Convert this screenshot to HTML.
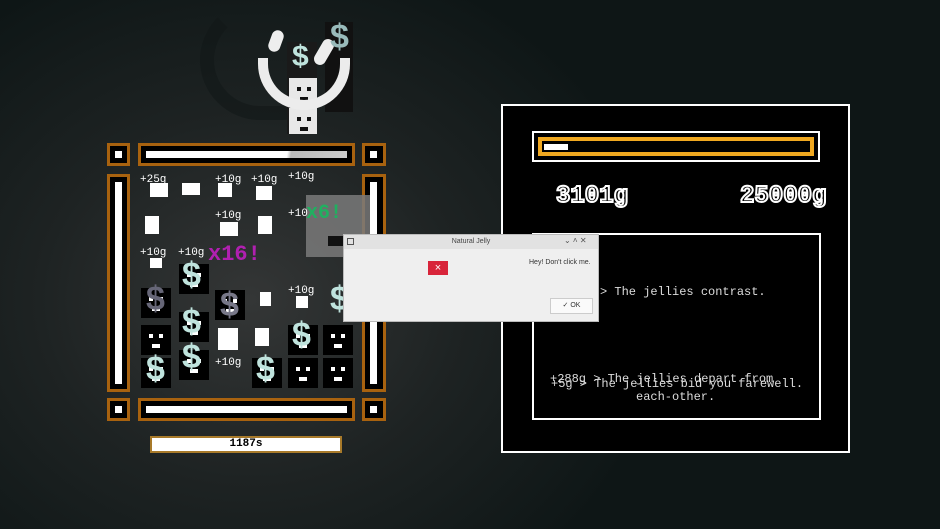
<!DOCTYPE html>
<html><head><style>
body{margin:0;width:940px;height:529px;overflow:hidden;background:radial-gradient(ellipse 420px 360px at 250px 300px,#343636 0%,#1e2323 50%,#0e1616 100%);position:relative;font-family:"Liberation Mono",monospace}
div{position:absolute;box-sizing:border-box}
.ob{border:3px solid #a8620f;background:#000}
.w{background:#fff}
.t{color:#fff;font-size:11px;white-space:nowrap}
.j{background:#000;width:30px;height:30px}
.j::before{content:"";position:absolute;background:#fff;width:4px;height:4px;top:9px;left:8px;box-shadow:10px 0 #fff}
.j::after{content:"";position:absolute;background:#fff;width:8px;height:4px;top:19px;left:11px}
.jw::before{background:#111;box-shadow:10px 0 #111}
.jw::after{background:#111}
.d{color:#bfe3dd;font-size:34px;font-weight:bold;font-family:"Liberation Sans",sans-serif;line-height:1}
.p{background:#fff}
</style></head><body>
<div style="left:200px;top:0;width:140px;height:120px;border-radius:70px;border:14px solid #121818;border-top-color:transparent;border-right-color:transparent;opacity:.6"></div>
<div style="left:287px;top:42px;width:30px;height:92px;background:#1a1a1a"></div>
<div style="left:325px;top:22px;width:28px;height:90px;background:#111"></div>
<div class="j jw" style="left:289px;top:78px;width:28px;height:26px;background:#e8e8e8"></div>
<div class="j jw" style="left:289px;top:108px;width:28px;height:26px;background:#e8e8e8"></div>
<div style="left:258px;top:58px;width:92px;height:52px;border:10px solid #ececec;border-top:none;border-radius:0 0 60px 60px"></div>
<div style="left:270px;top:30px;width:12px;height:22px;background:#eee;border-radius:6px;transform:rotate(20deg)"></div>
<div style="left:318px;top:38px;width:12px;height:28px;background:#eee;border-radius:6px;transform:rotate(30deg)"></div>
<div class="d" style="left:292px;top:42px;font-size:30px">$</div>
<div class="d" style="left:330px;top:20px;font-size:34px;color:#9bb">$</div>
<div class="ob" style="left:107px;top:143px;width:23px;height:23px"><div class="w" style="left:5px;top:5px;width:7px;height:7px"></div></div>
<div class="ob" style="left:362px;top:143px;width:24px;height:23px"><div class="w" style="left:5px;top:5px;width:7px;height:7px"></div></div>
<div class="ob" style="left:107px;top:398px;width:23px;height:23px"><div class="w" style="left:5px;top:5px;width:7px;height:7px"></div></div>
<div class="ob" style="left:362px;top:398px;width:24px;height:23px"><div class="w" style="left:5px;top:5px;width:7px;height:7px"></div></div>
<div class="ob" style="left:138px;top:143px;width:217px;height:23px"><div class="w" style="left:5px;top:5px;width:201px;height:7px;background:linear-gradient(100deg,#fff 70%,#bbb 72%,#ccc)"></div></div>
<div class="ob" style="left:138px;top:398px;width:217px;height:23px"><div class="w" style="left:5px;top:5px;width:201px;height:7px"></div></div>
<div class="ob" style="left:107px;top:174px;width:23px;height:218px"><div class="w" style="left:5px;top:5px;width:7px;height:202px"></div></div>
<div class="ob" style="left:362px;top:174px;width:24px;height:218px"><div class="w" style="left:5px;top:5px;width:7px;height:202px"></div></div>
<div style="left:150px;top:436px;width:192px;height:17px;background:#fff;border:2px solid #a87a2a;font-size:11px;text-align:center;font-weight:bold;line-height:13px">1187s</div>
<div style="left:306px;top:195px;width:64px;height:62px;background:#7a7a7a;opacity:.85"></div>
<div style="left:328px;top:236px;width:18px;height:10px;background:#111"></div>
<div class="j" style="left:141px;top:288px"></div>
<div class="j" style="left:141px;top:325px"></div>
<div class="j" style="left:141px;top:358px"></div>
<div class="j" style="left:179px;top:264px"></div>
<div class="j" style="left:179px;top:312px"></div>
<div class="j" style="left:179px;top:350px"></div>
<div class="j" style="left:215px;top:290px"></div>
<div class="j" style="left:252px;top:358px"></div>
<div class="j" style="left:288px;top:325px"></div>
<div class="j" style="left:288px;top:358px"></div>
<div class="j" style="left:323px;top:325px"></div>
<div class="j" style="left:323px;top:358px"></div>
<div class="d" style="left:146px;top:352px">$</div>
<div class="d" style="left:182px;top:258px">$</div>
<div class="d" style="left:182px;top:305px">$</div>
<div class="d" style="left:182px;top:340px">$</div>
<div class="d" style="left:256px;top:352px">$</div>
<div class="d" style="left:292px;top:318px">$</div>
<div class="d" style="left:330px;top:282px">$</div>
<div class="d" style="left:146px;top:282px;color:#667">$</div>
<div class="d" style="left:220px;top:288px;color:#778">$</div>
<div class="p" style="left:150px;top:183px;width:18px;height:14px"></div>
<div class="p" style="left:182px;top:183px;width:18px;height:12px"></div>
<div class="p" style="left:218px;top:183px;width:14px;height:14px"></div>
<div class="p" style="left:256px;top:186px;width:16px;height:14px"></div>
<div class="p" style="left:145px;top:216px;width:14px;height:18px"></div>
<div class="p" style="left:220px;top:222px;width:18px;height:14px"></div>
<div class="p" style="left:258px;top:216px;width:14px;height:18px"></div>
<div class="p" style="left:150px;top:258px;width:12px;height:10px"></div>
<div class="p" style="left:260px;top:292px;width:11px;height:14px"></div>
<div class="p" style="left:218px;top:328px;width:20px;height:22px"></div>
<div class="p" style="left:255px;top:328px;width:14px;height:18px"></div>
<div class="p" style="left:296px;top:296px;width:12px;height:12px"></div>
<div class="t" style="left:140px;top:174px">+25g</div>
<div class="t" style="left:215px;top:174px">+10g</div>
<div class="t" style="left:251px;top:174px">+10g</div>
<div class="t" style="left:288px;top:171px">+10g</div>
<div class="t" style="left:215px;top:210px">+10g</div>
<div class="t" style="left:288px;top:208px">+10</div>
<div class="t" style="left:140px;top:247px">+10g</div>
<div class="t" style="left:178px;top:247px">+10g</div>
<div class="t" style="left:288px;top:285px">+10g</div>
<div class="t" style="left:215px;top:357px">+10g</div>
<div class="t" style="left:208px;top:242px;color:#b020b0;font-size:22px;font-weight:bold">x16!</div>
<div class="t" style="left:306px;top:202px;color:#20b060;font-size:20px;font-weight:bold">x6!</div>
<div style="left:501px;top:104px;width:349px;height:349px;background:#000;border:2px solid #fff"></div>
<div style="left:532px;top:131px;width:288px;height:31px;border:2px solid #fff;background:#000"><div style="left:4px;top:4px;width:276px;height:19px;border:4px solid #f0a820"><div class="w" style="left:2px;top:3px;width:24px;height:6px"></div></div></div>
<div class="t" style="left:556px;top:183px;font-size:24px;font-weight:bold;color:#000;-webkit-text-stroke:2px #fff">3101g</div>
<div class="t" style="left:740px;top:183px;font-size:24px;font-weight:bold;color:#000;-webkit-text-stroke:2px #fff">25000g</div>
<div style="left:532px;top:233px;width:289px;height:187px;border:2px solid #fff"></div>
<div class="t" style="left:600px;top:285px;font-size:12px;color:#ddd">&gt; The jellies contrast.</div>
<div class="t" style="left:550px;top:372px;font-size:12px;color:#ddd">+288g &gt; The jellies depart from</div>
<div class="t" style="left:551px;top:377px;font-size:12px;color:#ddd">+5g &gt; The jellies bid you farewell.</div>
<div class="t" style="left:636px;top:390px;font-size:12px;color:#ddd">each-other.</div>
<div style="left:343px;top:234px;width:256px;height:88px;background:#efefef;border:1px solid #bbb;font-family:'Liberation Sans',sans-serif">
<div style="left:0;top:0;width:254px;height:14px;background:#e2e2e2;font-size:7px;color:#444;text-align:center;line-height:14px">Natural Jelly</div>
<div style="left:3px;top:3px;width:7px;height:7px;border:1px solid #555"></div>
<div style="left:220px;top:1px;font-size:8px;color:#555">⌄ ˄ ✕</div>
<div style="left:84px;top:26px;width:20px;height:14px;background:#d8243a;color:#fff;font-size:11px;text-align:center;line-height:14px">×</div>
<div style="left:185px;top:24px;font-size:7px;color:#333;white-space:nowrap">Hey! Don't click me.</div>
<div style="left:206px;top:63px;width:43px;height:16px;background:#fafafa;border:1px solid #ccc;font-size:7px;text-align:center;line-height:14px;color:#333">✓ OK</div>
</div>
</body></html>
